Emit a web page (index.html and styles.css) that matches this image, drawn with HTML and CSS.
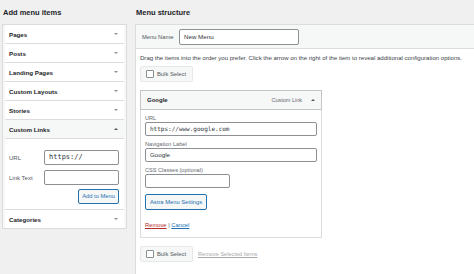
FILE: index.html
```html
<!DOCTYPE html>
<html lang="en">
<head>
    <meta charset="UTF-8">
    <title>Menus</title>
    <link rel="stylesheet" href="styles.css">
</head>
<body>
    <div class="wrap">
        <div class="side">
            <h3 class="ttl">Add menu items</h3>
            <div class="acc">
                <div class="row"><span>Pages</span><i class="arr dn"></i></div>
                <div class="row"><span>Posts</span><i class="arr dn"></i></div>
                <div class="row"><span>Landing Pages</span><i class="arr dn"></i></div>
                <div class="row"><span>Custom Layouts</span><i class="arr dn"></i></div>
                <div class="row"><span>Stories</span><i class="arr dn"></i></div>
                <div class="row open"><span>Custom Links</span><i class="arr up"></i></div>
                <div class="links">
                    <div class="fld">
                        <label>URL</label>
                        <div class="inp mono">https://</div>
                    </div>
                    <div class="fld">
                        <label>Link Text</label>
                        <div class="inp"></div>
                    </div>
                    <div class="btn-row">
                        <div class="btn">Add to Menu</div>
                    </div>
                </div>
                <div class="row last"><span>Categories</span><i class="arr dn"></i></div>
            </div>
        </div>

        <div class="main">
            <h3 class="ttl">Menu structure</h3>
            <div class="panel">
                <div class="namebar">
                    <label>Menu Name</label>
                    <div class="inp name">New Menu</div>
                </div>
                <div class="body">
                    <p class="hint">Drag the items into the order you prefer. Click the arrow on the right of the item to reveal additional configuration options.</p>
                    <div class="bulk"><span class="chk"></span>Bulk Select</div>

                    <div class="item">
                        <div class="item-head">
                            <b>Google</b>
                            <span class="type">Custom Link</span>
                            <i class="arr up"></i>
                        </div>
                        <div class="item-body">
                            <label>URL</label>
                            <div class="inp mono">https://www.google.com</div>
                            <label>Navigation Label</label>
                            <div class="inp">Google</div>
                            <label>CSS Classes (optional)</label>
                            <div class="inp half"></div>
                            <div class="btn astra">Astra Menu Settings</div>
                            <div class="acts"><a class="rm">Remove</a> | <a>Cancel</a></div>
                        </div>
                    </div>

                    <div class="foot">
                        <div class="bulk"><span class="chk"></span>Bulk Select</div>
                        <a class="off">Remove Selected Items</a>
                    </div>
                </div>
            </div>
        </div>
    </div>
</body>
</html>
```

FILE: styles.css
```css
body {
    margin: 0;
    background: #f0f0f1;
    font-family: "Liberation Sans", Arial, sans-serif;
    color: #1d2327;
    font-size: 6px;
    overflow: hidden;
}

.wrap {
    display: grid;
    grid-template-columns: 125px 1fr;
    column-gap: 8px;
    padding-left: 2px;
    height: 274px;
}

.ttl {
    margin: 0;
    height: 24px;
    line-height: 26px;
    font-size: 7.5px;
    font-weight: 600;
    padding-left: 1px;
}

.acc {
    border: 1px solid #dcdcde;
    background: #f6f7f7;
    padding: 0 2px;
}

.row {
    display: flex;
    align-items: center;
    justify-content: space-between;
    height: 18px;
    padding: 0 6px 0 4px;
    background: #fff;
    border-bottom: 1px solid #dcdcde;
    font-weight: 600;
    font-size: 6.2px;
    color: #1d2327;
}

.row.open {
    background: #f6f7f7;
}

.row.last {
    border-bottom: 0;
    height: 18px;
}

.arr {
    width: 0;
    height: 0;
    border-left: 2px solid transparent;
    border-right: 2px solid transparent;
}

.arr.dn {
    border-top: 2.5px solid #8c8f94;
}

.arr.up {
    border-bottom: 2.5px solid #50575e;
}

.links {
    background: #fff;
    padding: 11px 5px 5px 4px;
    border-bottom: 1px solid #dcdcde;
}

.fld {
    display: flex;
    align-items: center;
    margin-bottom: 5px;
}

.fld label {
    width: 35px;
    color: #50575e;
    font-size: 6px;
}

.inp {
    height: 13px;
    border: 1px solid #8c8f94;
    border-radius: 2px;
    background: #fff;
    line-height: 13px;
    padding: 0 4px;
    box-sizing: content-box;
    font-size: 6.2px;
    color: #2c3338;
}

.fld .inp {
    flex: 1;
}

.mono {
    font-family: "DejaVu Sans Mono", "Liberation Mono", monospace;
    font-size: 6px;
}

.fld .mono {
    font-size: 7px;
}

.btn-row {
    display: flex;
    justify-content: flex-end;
    margin-top: -1px;
}

.btn {
    border: 1px solid #2271b1;
    border-radius: 2px;
    background: #f6f7f7;
    color: #2271b1;
    font-size: 5.8px;
    height: 13px;
    line-height: 13px;
    padding: 0 3px;
}

.main {
    display: flex;
    flex-direction: column;
}

.panel {
    flex: 1;
    background: #fff;
    border-top: 1px solid #dcdcde;
    border-left: 1px solid #dcdcde;
}

.namebar {
    display: flex;
    align-items: center;
    height: 23px;
    background: #f6f7f7;
    border-bottom: 1px solid #dcdcde;
    padding-left: 6px;
}

.namebar label {
    font-size: 5.8px;
    color: #50575e;
    width: 37px;
}

.inp.name {
    width: 110px;
    height: 14px;
    line-height: 14px;
}

.body {
    padding: 0 0 0 4px;
}

.hint {
    margin: 6px 0 5px 0;
    font-size: 6.05px;
    color: #3c434a;
    white-space: nowrap;
}

.bulk {
    display: inline-flex;
    align-items: center;
    height: 14px;
    padding: 0 6px 0 5px;
    background: #f6f7f7;
    border: 1px solid #e8e8e8;
    border-radius: 2px;
    font-size: 5.8px;
    color: #50575e;
}

.chk {
    width: 6px;
    height: 6px;
    border: 1px solid #8c8f94;
    border-radius: 1px;
    background: #fff;
    margin-right: 3px;
}

.item {
    width: 180px;
    margin-top: 8px;
    border: 1px solid #dcdcde;
}

.item-head {
    display: flex;
    align-items: center;
    height: 18px;
    background: #f6f7f7;
    padding: 0 6px 0 6px;
    border: 1px solid #c3c4c7;
    margin: -1px -1px 0 -1px;
}

.item-head b {
    font-size: 6px;
    font-weight: 600;
    flex: 1;
}

.item-head .type {
    font-size: 5.5px;
    color: #646970;
    margin-right: 9px;
}

.item-body {
    display: flex;
    flex-direction: column;
    align-items: flex-start;
    padding: 5px 4px 9px 4px;
}

.item-body label {
    font-size: 5.6px;
    color: #646970;
    margin-bottom: 1px;
}

.item-body .inp {
    align-self: stretch;
    margin-bottom: 5px;
    height: 12px;
    line-height: 12px;
}

.item-body .inp.half {
    align-self: flex-start;
    width: 75px;
    height: 12px;
}

.astra {
    margin-top: 1px;
    height: 14px;
    line-height: 14px;
    padding: 0 4px;
}

.acts {
    margin-top: 12px;
    font-size: 5.8px;
    color: #50575e;
}

.acts a {
    color: #2271b1;
    text-decoration: underline;
}

.acts a.rm {
    color: #b32d2e;
}

.foot {
    display: flex;
    align-items: center;
    margin-top: 8px;
}

.off {
    margin-left: 5px;
    font-size: 5.6px;
    color: #a7aaad;
    text-decoration: underline;
}
```
